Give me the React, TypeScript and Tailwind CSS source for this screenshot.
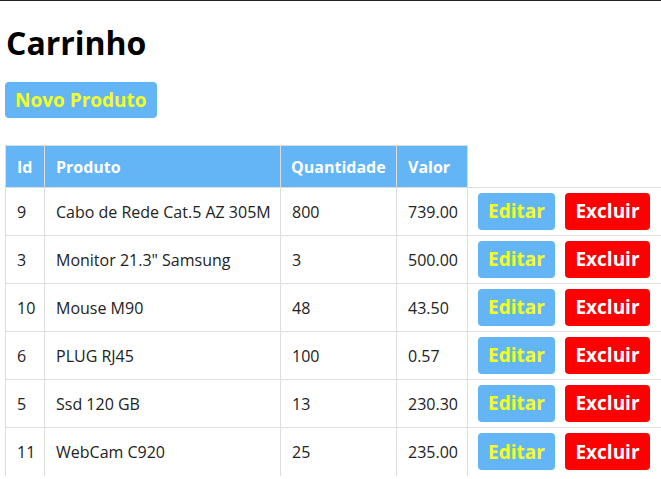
const ITEMS = [
  { id: 9, produto: "Cabo de Rede Cat.5 AZ 305M", qtd: 800, valor: "739.00" },
  { id: 3, produto: 'Monitor 21.3" Samsung', qtd: 3, valor: "500.00" },
  { id: 10, produto: "Mouse M90", qtd: 48, valor: "43.50" },
  { id: 6, produto: "PLUG RJ45", qtd: 100, valor: "0.57" },
  { id: 5, produto: "Ssd 120 GB", qtd: 13, valor: "230.30" },
  { id: 11, produto: "WebCam C920", qtd: 25, valor: "235.00" },
];

export default function App() {
  return (
    <div className="h-[479px] w-[661px] overflow-hidden border-t border-[#222] bg-white font-['Open_Sans',sans-serif] text-[#222]">
      <div className="px-[5px]">
        <h1 className="mt-[20px] pl-[1px] text-[32px] font-bold leading-[44px] text-black">Carrinho</h1>
        <button className="mt-[17px] h-[36px] rounded-[4px] bg-[#64b5f6] px-[10px] text-[19px] font-bold text-[#f5ff1f]">
          Novo Produto
        </button>
        <table className="mt-[27px] w-[700px] table-fixed border-collapse text-[16px]">
          <thead>
            <tr className="h-[42px]">
              <th className="w-[39px] border border-[#ddd] bg-[#64b5f6] px-[11px] text-left font-bold text-white">Id</th>
              <th className="w-[236px] border border-[#ddd] bg-[#64b5f6] px-[11px] text-left font-bold text-white">Produto</th>
              <th className="w-[116px] border border-[#ddd] bg-[#64b5f6] px-[10px] text-left font-bold text-white">Quantidade</th>
              <th className="w-[71px] border border-[#ddd] bg-[#64b5f6] px-[11px] text-left font-bold text-white">Valor</th>
              <th className="border-l border-[#ddd]" />
            </tr>
          </thead>
          <tbody>
            {ITEMS.map((it, i) => {
              const last = i === ITEMS.length - 1;
              const b = last ? "border-x border-t border-[#ddd]" : "border border-[#ddd]";
              return (
                <tr key={it.id} className="h-[48px]">
                  <td className={`${b} px-[11px]`}>{it.id}</td>
                  <td className={`${b} px-[11px] whitespace-nowrap`}>{it.produto}</td>
                  <td className={`${b} px-[11px]`}>{it.qtd}</td>
                  <td className={`${b} px-[11px]`}>{it.valor}</td>
                  <td className={`${last ? "border-t" : "border-y"} border-l border-[#ddd] px-[10px]`}>
                    <div className="flex gap-[10px]">
                      <button className="h-[37px] w-[77px] rounded-[4px] bg-[#64b5f6] text-[19px] font-bold text-[#f5ff1f]">
                        Editar
                      </button>
                      <button className="h-[37px] w-[85px] rounded-[4px] bg-[#ff0000] text-[19px] font-bold text-white">
                        Excluir
                      </button>
                    </div>
                  </td>
                </tr>
              );
            })}
          </tbody>
        </table>
      </div>
    </div>
  );
}
